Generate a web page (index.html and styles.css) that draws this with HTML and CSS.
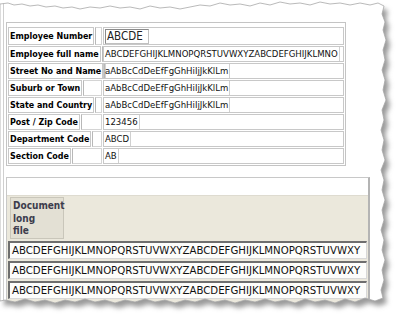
FILE: index.html
```html
<!DOCTYPE html>
<html lang="en">
<head>
  <meta charset="UTF-8">
  <meta name="viewport" content="width=device-width, initial-scale=1.0">
  <title>Employee Record</title>
  <link rel="stylesheet" href="styles.css">
</head>
<body>
  <div class="window">
    <section class="record">
      <div class="row first">
        <div class="label-group"><span class="label">Employee Number</span><span class="pad"></span></div>
        <div class="value"><span class="field big">ABCDE</span></div>
      </div>
      <div class="row">
        <div class="label-group"><span class="label">Employee full name</span><span class="pad"></span></div>
        <div class="value"><span class="field">ABCDEFGHIJKLMNOPQRSTUVWXYZABCDEFGHIJKLMNO</span></div>
      </div>
      <div class="row">
        <div class="label-group"><span class="label">Street No and Name</span><span class="pad"></span></div>
        <div class="value"><span class="field">aAbBcCdDeEfFgGhHiIjJkKlLm</span></div>
      </div>
      <div class="row">
        <div class="label-group"><span class="label">Suburb or Town</span><span class="pad"></span></div>
        <div class="value"><span class="field">aAbBcCdDeEfFgGhHiIjJkKlLm</span></div>
      </div>
      <div class="row">
        <div class="label-group"><span class="label">State and Country</span><span class="pad"></span></div>
        <div class="value"><span class="field">aAbBcCdDeEfFgGhHiIjJkKlLm</span></div>
      </div>
      <div class="row">
        <div class="label-group"><span class="label">Post / Zip Code</span><span class="pad"></span></div>
        <div class="value"><span class="field">123456</span></div>
      </div>
      <div class="row">
        <div class="label-group"><span class="label">Department Code</span><span class="pad"></span></div>
        <div class="value"><span class="field">ABCD</span></div>
      </div>
      <div class="row">
        <div class="label-group"><span class="label">Section Code</span><span class="pad"></span></div>
        <div class="value"><span class="field">AB</span></div>
      </div>
    </section>

    <section class="doc-grid">
      <div class="grid-top"></div>
      <div class="grid-head">
        <div class="col-head">Document<br>long<br>file</div>
      </div>
      <div class="grid-rows">
        <div class="cell-input">ABCDEFGHIJKLMNOPQRSTUVWXYZABCDEFGHIJKLMNOPQRSTUVWXY</div>
        <div class="cell-input">ABCDEFGHIJKLMNOPQRSTUVWXYZABCDEFGHIJKLMNOPQRSTUVWXY</div>
        <div class="cell-input">ABCDEFGHIJKLMNOPQRSTUVWXYZABCDEFGHIJKLMNOPQRSTUVWXY</div>
      </div>
    </section>
  </div>

  <!-- torn paper edge drawn over the screenshot -->
  <svg class="torn" width="397" height="318" viewBox="0 0 397 318">
    <defs>
      <path id="paper" d="M0,4 L8,3 L14,5 L22,4 L30,6 L38,5 L46,7 L55,6 L63,8 L72,7 L80,9 L90,7 L100,8 L110,6 L120,8 L130,7 L140,9 L150,6 L160,8 L170,7 L180,9 L190,7 L200,5 L210,6 L220,3 L230,5 L240,4 L250,6 L260,3 L270,5 L280,2 L290,4 L300,3 L310,5 L320,2 L330,4 L340,3 L350,5 L360,3 L370,5 L378,3 L384,6 L382,14 L385,22 L383,30 L386,40 L383,50 L385,60 L382,70 L385,80 L383,90 L386,100 L382,110 L384,120 L381,130 L384,140 L382,150 L385,160 L381,170 L384,180 L382,190 L385,200 L382,210 L384,220 L381,230 L384,240 L382,250 L385,260 L382,270 L384,280 L381,290 L383,298 L375,301 L365,298 L355,302 L345,299 L335,303 L325,300 L315,302 L305,299 L295,303 L285,300 L275,302 L265,299 L255,302 L245,300 L235,303 L225,300 L215,302 L205,299 L195,302 L185,300 L175,303 L165,300 L155,302 L145,299 L135,302 L125,300 L115,303 L105,300 L95,302 L85,299 L75,302 L65,300 L55,303 L45,300 L35,302 L25,299 L15,302 L5,300 L0,301 Z"/>
      <filter id="blur" x="-10%" y="-10%" width="120%" height="120%">
        <feGaussianBlur stdDeviation="2.5"/>
      </filter>
      <clipPath id="outside">
        <path clip-rule="evenodd" d="M0,0 H397 V318 H0 Z M0,4 L8,3 L14,5 L22,4 L30,6 L38,5 L46,7 L55,6 L63,8 L72,7 L80,9 L90,7 L100,8 L110,6 L120,8 L130,7 L140,9 L150,6 L160,8 L170,7 L180,9 L190,7 L200,5 L210,6 L220,3 L230,5 L240,4 L250,6 L260,3 L270,5 L280,2 L290,4 L300,3 L310,5 L320,2 L330,4 L340,3 L350,5 L360,3 L370,5 L378,3 L384,6 L382,14 L385,22 L383,30 L386,40 L383,50 L385,60 L382,70 L385,80 L383,90 L386,100 L382,110 L384,120 L381,130 L384,140 L382,150 L385,160 L381,170 L384,180 L382,190 L385,200 L382,210 L384,220 L381,230 L384,240 L382,250 L385,260 L382,270 L384,280 L381,290 L383,298 L375,301 L365,298 L355,302 L345,299 L335,303 L325,300 L315,302 L305,299 L295,303 L285,300 L275,302 L265,299 L255,302 L245,300 L235,303 L225,300 L215,302 L205,299 L195,302 L185,300 L175,303 L165,300 L155,302 L145,299 L135,302 L125,300 L115,303 L105,300 L95,302 L85,299 L75,302 L65,300 L55,303 L45,300 L35,302 L25,299 L15,302 L5,300 L0,301 Z"/>
      </clipPath>
    </defs>
    <g clip-path="url(#outside)">
      <rect width="397" height="318" fill="#fff"/>
      <use href="#paper" transform="translate(4,5)" fill="#9a9a9a" filter="url(#blur)"/>
    </g>
    <use href="#paper" fill="none" stroke="#a8a8a8" stroke-width="0.8"/>
  </svg>
</body>
</html>
```

FILE: styles.css
```css
body {
  margin: 0;
  background: #fff;
  font-family: "DejaVu Sans Condensed", "DejaVu Sans", "Liberation Sans", sans-serif;
  font-stretch: condensed;
  color: #000;
  overflow: hidden;
}

.window {
  margin-left: 3px;
  height: 318px;
  padding: 22px 0 0 2px;
  border-left: 1px solid #cfcfcf;
  box-sizing: border-box;
}

/* top record form */
.record {
  width: 336px;
  border: 1px solid #c4c4c4;
  padding: 4px 1px 1px 1px;
  display: flex;
  flex-direction: column;
  gap: 1px;
}

.row {
  display: grid;
  grid-template-columns: 94px 1fr;
  gap: 1px;
  height: 16px;
}

.row.first {
  height: 18px;
}

.label-group {
  display: flex;
  gap: 1px;
}

.label {
  border: 1px solid #c8c8c8;
  padding: 0 1px;
  font-weight: bold;
  font-size: 8.9px;
  line-height: 14px;
  white-space: nowrap;
}

.row.first .label {
  line-height: 16px;
}

.pad {
  flex: 1;
  border: 1px solid #d4d4d4;
  border-left-color: #b8b8b8;
}

.value {
  border: 1px solid #c8c8c8;
  overflow: hidden;
  display: flex;
}

.field {
  padding: 0 1px;
  border-right: 1px solid #d0d0d0;
  font-size: 9.5px;
  line-height: 14px;
  white-space: nowrap;
  color: #111;
}

.field.big {
  margin: 1px 0 0 1px;
  width: 40px;
  height: 13px;
  border: 1px solid #c0c0c0;
  border-top-color: #8a8a8a;
  border-left-color: #8a8a8a;
  font-size: 11.5px;
  line-height: 13px;
  color: #222;
}

/* lower document grid */
.doc-grid {
  margin-top: 11px;
  width: 361px;
  height: 140px;
  border-top: 1px solid #c8c8c8;
  border-left: 1px solid #c8c8c8;
  border-right: 2px solid #b4b4b4;
  display: flex;
  flex-direction: column;
}

.grid-top {
  height: 17px;
  background: #fff;
}

.grid-head {
  background: #ebe8dc;
  padding: 1px 0 2px 3px;
  border-top: 1px solid #dedbd0;
}

.col-head {
  width: 48px;
  height: 37px;
  padding: 2px 2px 1px 2px;
  background: #e3e0d4;
  border: 1px solid #c9c6ba;
  font-weight: bold;
  font-size: 10px;
  line-height: 12.5px;
  color: #3c3c4c;
}

.grid-rows {
  flex: 1;
  background: #ebe8dc;
  display: flex;
  flex-direction: column;
  gap: 2px;
  padding: 0 1px;
}

.cell-input {
  height: 13px;
  padding: 1px 2px;
  background: #fdfdfb;
  border-top: 2px solid #6e6e6e;
  border-left: 2px solid #6e6e6e;
  border-right: 1px solid #d8d8d8;
  border-bottom: 1px solid #d8d8d8;
  font-size: 11.3px;
  line-height: 13px;
  white-space: nowrap;
  overflow: hidden;
  color: #111;
}

.torn {
  position: absolute;
  top: 0;
  left: 0;
  pointer-events: none;
}
```
